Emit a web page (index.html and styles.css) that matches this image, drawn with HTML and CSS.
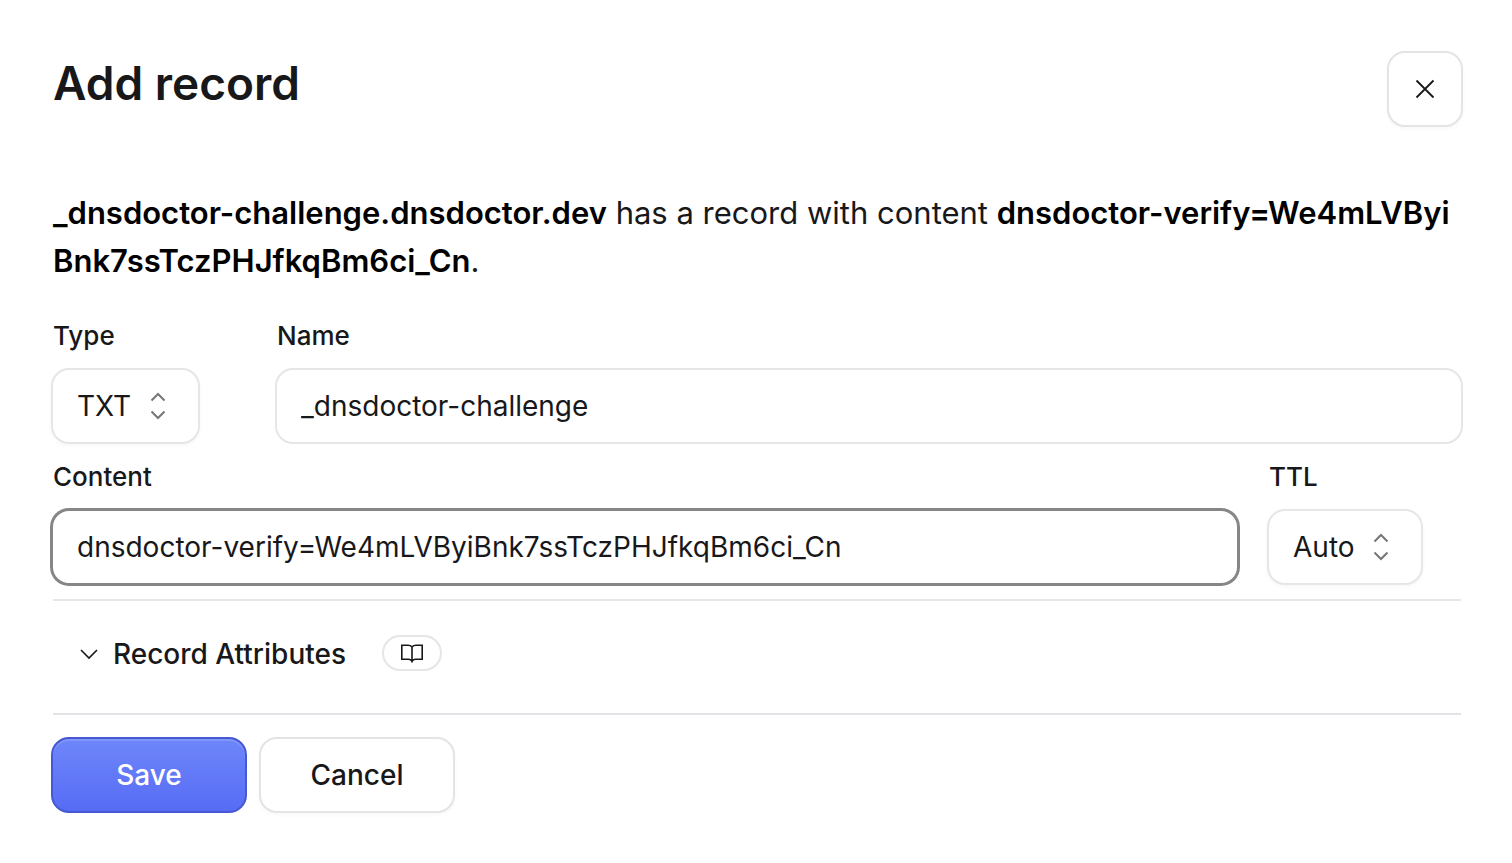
FILE: index.html
```html
<!DOCTYPE html>
<html lang="en">
<head>
    <title>Add record</title>
    <meta charset="utf-8">
    <meta name="viewport" content="width=device-width, initial-scale=1">
    <link rel="stylesheet" href="styles.css">
</head>
<body>
<main class="dialog">
    <header class="header">
        <h1>Add record</h1>
        <button class="btn close" type="button" aria-label="Close">
            <svg width="20" height="20" viewBox="0 0 20 20"><path d="M1.5 1.5l17 17M18.5 1.5l-17 17"/></svg>
        </button>
    </header>

    <p class="summary"><strong>_dnsdoctor-challenge.dnsdoctor.dev</strong> has a record with content <strong>dnsdoctor-verify=We4mLVByiBnk7ssTczPHJfkqBm6ci_Cn</strong>.</p>

    <form>
        <div class="row row-name">
            <div class="field">
                <label for="type">Type</label>
                <div class="select">
                    <select id="type" class="type">
                        <option>TXT</option>
                    </select>
                    <svg width="16" height="28" viewBox="0 0 16 28"><path d="M1.5 8.500L8 2l6.500 6.500M1.500 19.500L8 26l6.500-6.500"/></svg>
                </div>
            </div>
            <div class="field">
                <label for="name">Name</label>
                <input id="name" type="text" value="_dnsdoctor-challenge">
            </div>
        </div>
        <div class="row row-content">
            <div class="field">
                <label for="content">Content</label>
                <input id="content" class="active" type="text" value="dnsdoctor-verify=We4mLVByiBnk7ssTczPHJfkqBm6ci_Cn" spellcheck="false">
            </div>
            <div class="field">
                <label for="ttl">TTL</label>
                <div class="select">
                    <select id="ttl" class="ttl">
                        <option>Auto</option>
                    </select>
                    <svg width="16" height="28" viewBox="0 0 16 28"><path d="M1.5 8.500L8 2l6.500 6.500M1.500 19.500L8 26l6.500-6.500"/></svg>
                </div>
            </div>
        </div>

        <div class="attributes">
            <button class="toggle" type="button" aria-expanded="false">
                <svg width="20" height="12" viewBox="0 0 20 12"><path d="M2 2l8 8 8-8"/></svg>
                Record Attributes
            </button>
            <a class="docs" href="#docs" aria-label="Documentation">
                <svg width="24" height="20" viewBox="0 0 24 20"><path d="M12 4C11 2.700 9.800 2.200 8 2.200H1.800v14H8.500c1.800 0 2.800.6 3.500 2.300.7-1.700 1.700-2.300 3.500-2.300h6.700v-14H16c-1.800 0-3 .5-4 1.800zM12 4v14.500"/></svg>
            </a>
        </div>

        <div class="actions">
            <button class="btn save" type="submit">Save</button>
            <button class="btn" type="button">Cancel</button>
        </div>
    </form>
</main>
</body>
</html>
```
FILE: styles.css
```css
* {
    box-sizing: border-box;
    margin: 0;
    padding: 0;
}

body {
    background: #fff;
    color: #18181a;
    font-family: Inter, "Liberation Sans", sans-serif;
}

button, input, select {
    font: inherit;
    color: inherit;
}

svg {
    display: block;
    fill: none;
    stroke: currentColor;
    stroke-width: 2;
}

.dialog {
    padding: 51px 49px 50px 51px;
}

.header {
    display: flex;
    justify-content: space-between;
    align-items: flex-start;
    margin-bottom: 62px;
}

h1 {
    padding-left: 2px;
    font-size: 46px;
    line-height: 64px;
    font-weight: 600;
}

.btn {
    display: flex;
    justify-content: center;
    align-items: center;
    width: 196px;
    height: 76px;
    border: 2px solid #e4e4e4;
    border-radius: 18px;
    background: #fff;
    box-shadow: 0 2px 4px rgba(0, 0, 0, 0.03);
    font-size: 28px;
    font-weight: 500;
}

.close {
    width: 76px;
}

.close svg {
    stroke-width: 1.8;
}

.summary {
    margin-bottom: 35px;
    padding: 0 2px;
    font-size: 31px;
    line-height: 48px;
}

.summary strong {
    color: #000;
    font-weight: 600;
    word-break: break-all;
}

.row {
    display: grid;
    margin-bottom: 17px;
}

.row-name {
    grid-template-columns: 148px 1fr;
    gap: 76px;
}

.row-content {
    grid-template-columns: 1fr 196px;
    gap: 28px;
    margin-bottom: 14px;
}

label {
    display: block;
    margin-bottom: 16px;
    padding-left: 2px;
    font-size: 26px;
    line-height: 32px;
    font-weight: 500;
}

input, select {
    display: block;
    width: 100%;
    height: 76px;
    padding: 0 24px;
    border: 2px solid #e6e6e6;
    border-radius: 18px;
    background: #fff;
    font-size: 28px;
}

input.active {
    border-color: #868686;
    box-shadow: 0 0 0 1px #868686;
}

.select {
    position: relative;
    width: fit-content;
}

select {
    appearance: none;
    box-shadow: 0 2px 4px rgba(0, 0, 0, 0.03);
}

.type {
    width: 149px;
}

.ttl {
    width: 156px;
}

.select svg {
    position: absolute;
    top: 24px;
    right: 34px;
    color: #767676;
    pointer-events: none;
}

.attributes {
    display: flex;
    align-items: flex-start;
    gap: 36px;
    height: 116px;
    margin: 0 2px 22px;
    padding: 34px 26px;
    border-top: 2px solid #e6e6e6;
    border-bottom: 2px solid #e4e4e8;
}

.toggle {
    display: flex;
    align-items: center;
    gap: 14px;
    border: 0;
    background: none;
    font-size: 28px;
    line-height: 38px;
    font-weight: 500;
}

.toggle svg, .docs svg {
    stroke-width: 1.6;
}

.docs {
    display: flex;
    justify-content: center;
    align-items: center;
    width: 60px;
    height: 36px;
    border: 2px solid #e6e6e6;
    border-radius: 18px;
    color: inherit;
}

.actions {
    display: flex;
    gap: 12px;
}

.save {
    border-color: #4659d2;
    background: linear-gradient(#6e86fa, #576cf5);
    box-shadow: inset 0 2px 0 #8196fb;
    color: #fff;
}
```
